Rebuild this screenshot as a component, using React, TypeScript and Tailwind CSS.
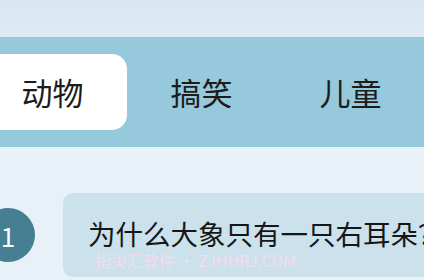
const tabs = ["动物", "搞笑", "儿童"];

export default function App() {
  const active = 0;
  return (
    <div
      className="w-[424px] h-[280px] overflow-hidden bg-[#e8f1f7]"
      style={{ fontFamily: '"Noto Sans CJK SC", "Noto Sans", sans-serif' }}
    >
      <div className="h-[37px] bg-gradient-to-b from-[#dae7f1] to-[#dde9f3]" />
      <div className="h-[110px] bg-[#96c9db] flex items-center">
        <div className="flex ml-[-22px]">
          {tabs.map((t, i) => (
            <div
              key={t}
              className={`w-[149px] h-[76px] shrink-0 flex items-center justify-center rounded-[15px] text-[31px] text-[#1c1c1c] ${
                i === active ? "bg-white" : ""
              }`}
            >
              {t}
            </div>
          ))}
        </div>
      </div>
      <div className="flex items-center mt-[46px] ml-[-19px]">
        <div className="w-[54px] h-[54px] shrink-0 rounded-full bg-[#467e92] flex items-center justify-center text-white text-[26px]">
          1
        </div>
        <div className="relative ml-[28px] h-[84px] w-[400px] shrink-0 rounded-[10px] bg-[#cbe1eb] flex items-center pl-[25px]">
          <span className="text-[27.5px] text-[#161616] whitespace-nowrap leading-none -mt-[3px]">
            为什么大象只有一只右耳朵？
          </span>
          <span className="absolute left-[32px] top-[59px] text-[16px] leading-none text-[#f6dceb] whitespace-nowrap">
            指尖汇软件 • ZJHHRJ.COM
          </span>
        </div>
      </div>
    </div>
  );
}
